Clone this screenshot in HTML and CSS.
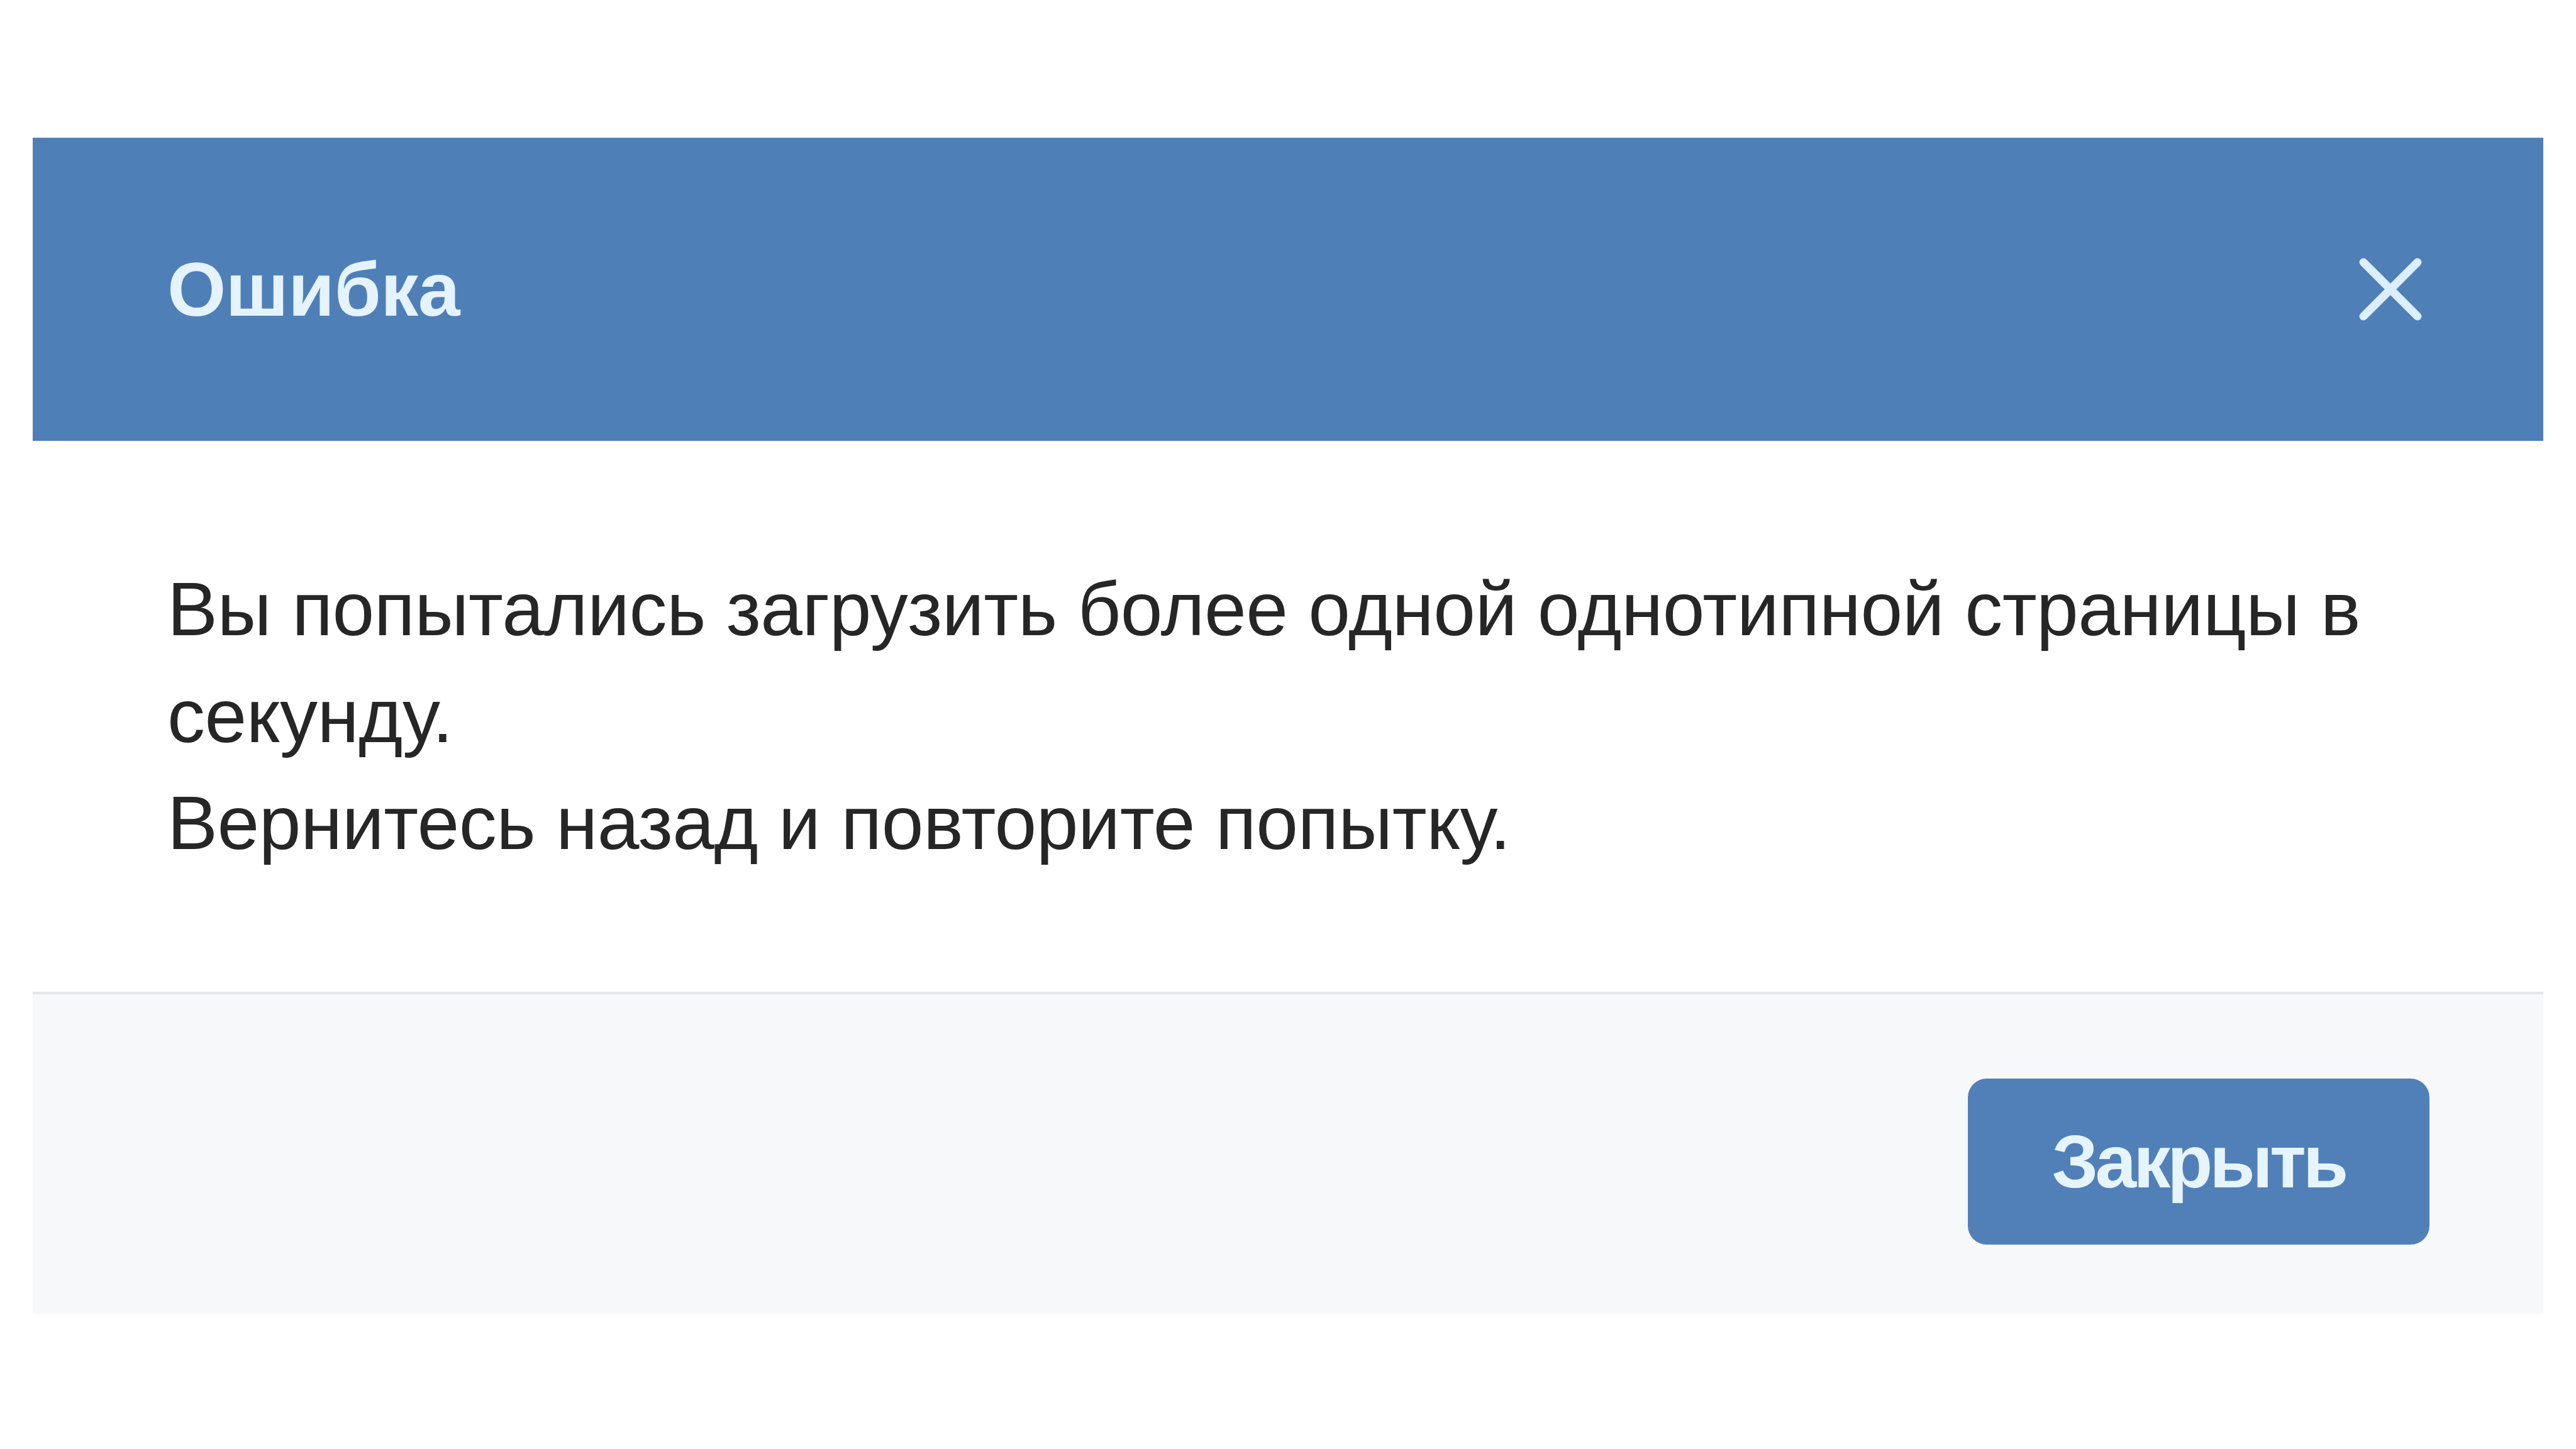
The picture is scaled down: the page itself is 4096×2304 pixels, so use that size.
FILE: index.html
```html
<!DOCTYPE html>
<html lang="ru">
<head>
<meta charset="utf-8">
<title>Ошибка</title>
<link rel="stylesheet" href="styles.css">
</head>
<body>
<div class="page">
  <div class="dialog">
    <div class="header">
      <div class="title">Ошибка</div>
      <div class="close">
        <svg width="100" height="100" viewBox="0 0 100 100">
          <path d="M7 7 L93 93 M93 7 L7 93" stroke="#dcefff" stroke-width="13" stroke-linecap="round" fill="none"/>
        </svg>
      </div>
    </div>
    <div class="body">
      <p class="msg">Вы попытались загрузить более одной однотипной страницы в секунду.<br>Вернитесь назад и повторите попытку.</p>
    </div>
    <div class="footer">
      <button class="btn">Закрыть</button>
    </div>
  </div>
</div>
</body>
</html>
```
FILE: styles.css
```css
html, body {
  margin: 0;
  padding: 0;
  background: #ffffff;
}
.page {
  padding: 219px 52px 0 52px;
}
.dialog {
  width: 3992px;
  font-family: "Liberation Sans", Arial, sans-serif;
}
.header {
  height: 482px;
  background: #4f7fb7;
  display: flex;
  align-items: center;
  justify-content: space-between;
  padding: 0 193px 0 214px;
  box-sizing: border-box;
}
.title {
  color: #e4f3ff;
  font-weight: bold;
  font-size: 120px;
  letter-spacing: -0.5px;
}
.close {
  width: 100px;
  height: 100px;
  display: flex;
}
.body {
  background: #ffffff;
  padding: 182px 214px 184px 214px;
  border-bottom: 4px solid #e6e8eb;
}
.msg {
  margin: 0;
  color: #262626;
  font-size: 120px;
  line-height: 170px;
  letter-spacing: -0.5px;
}
.footer {
  background: #f7f8fa;
  display: flex;
  justify-content: flex-end;
  padding: 134px 181px 110px 0;
}
.btn {
  width: 734px;
  height: 264px;
  border: none;
  border-radius: 30px;
  background: #5180b8;
  color: #e6f4ff;
  font-family: "Liberation Sans", Arial, sans-serif;
  font-weight: bold;
  font-size: 118px;
  letter-spacing: -5px;
  padding: 0;
}
```
